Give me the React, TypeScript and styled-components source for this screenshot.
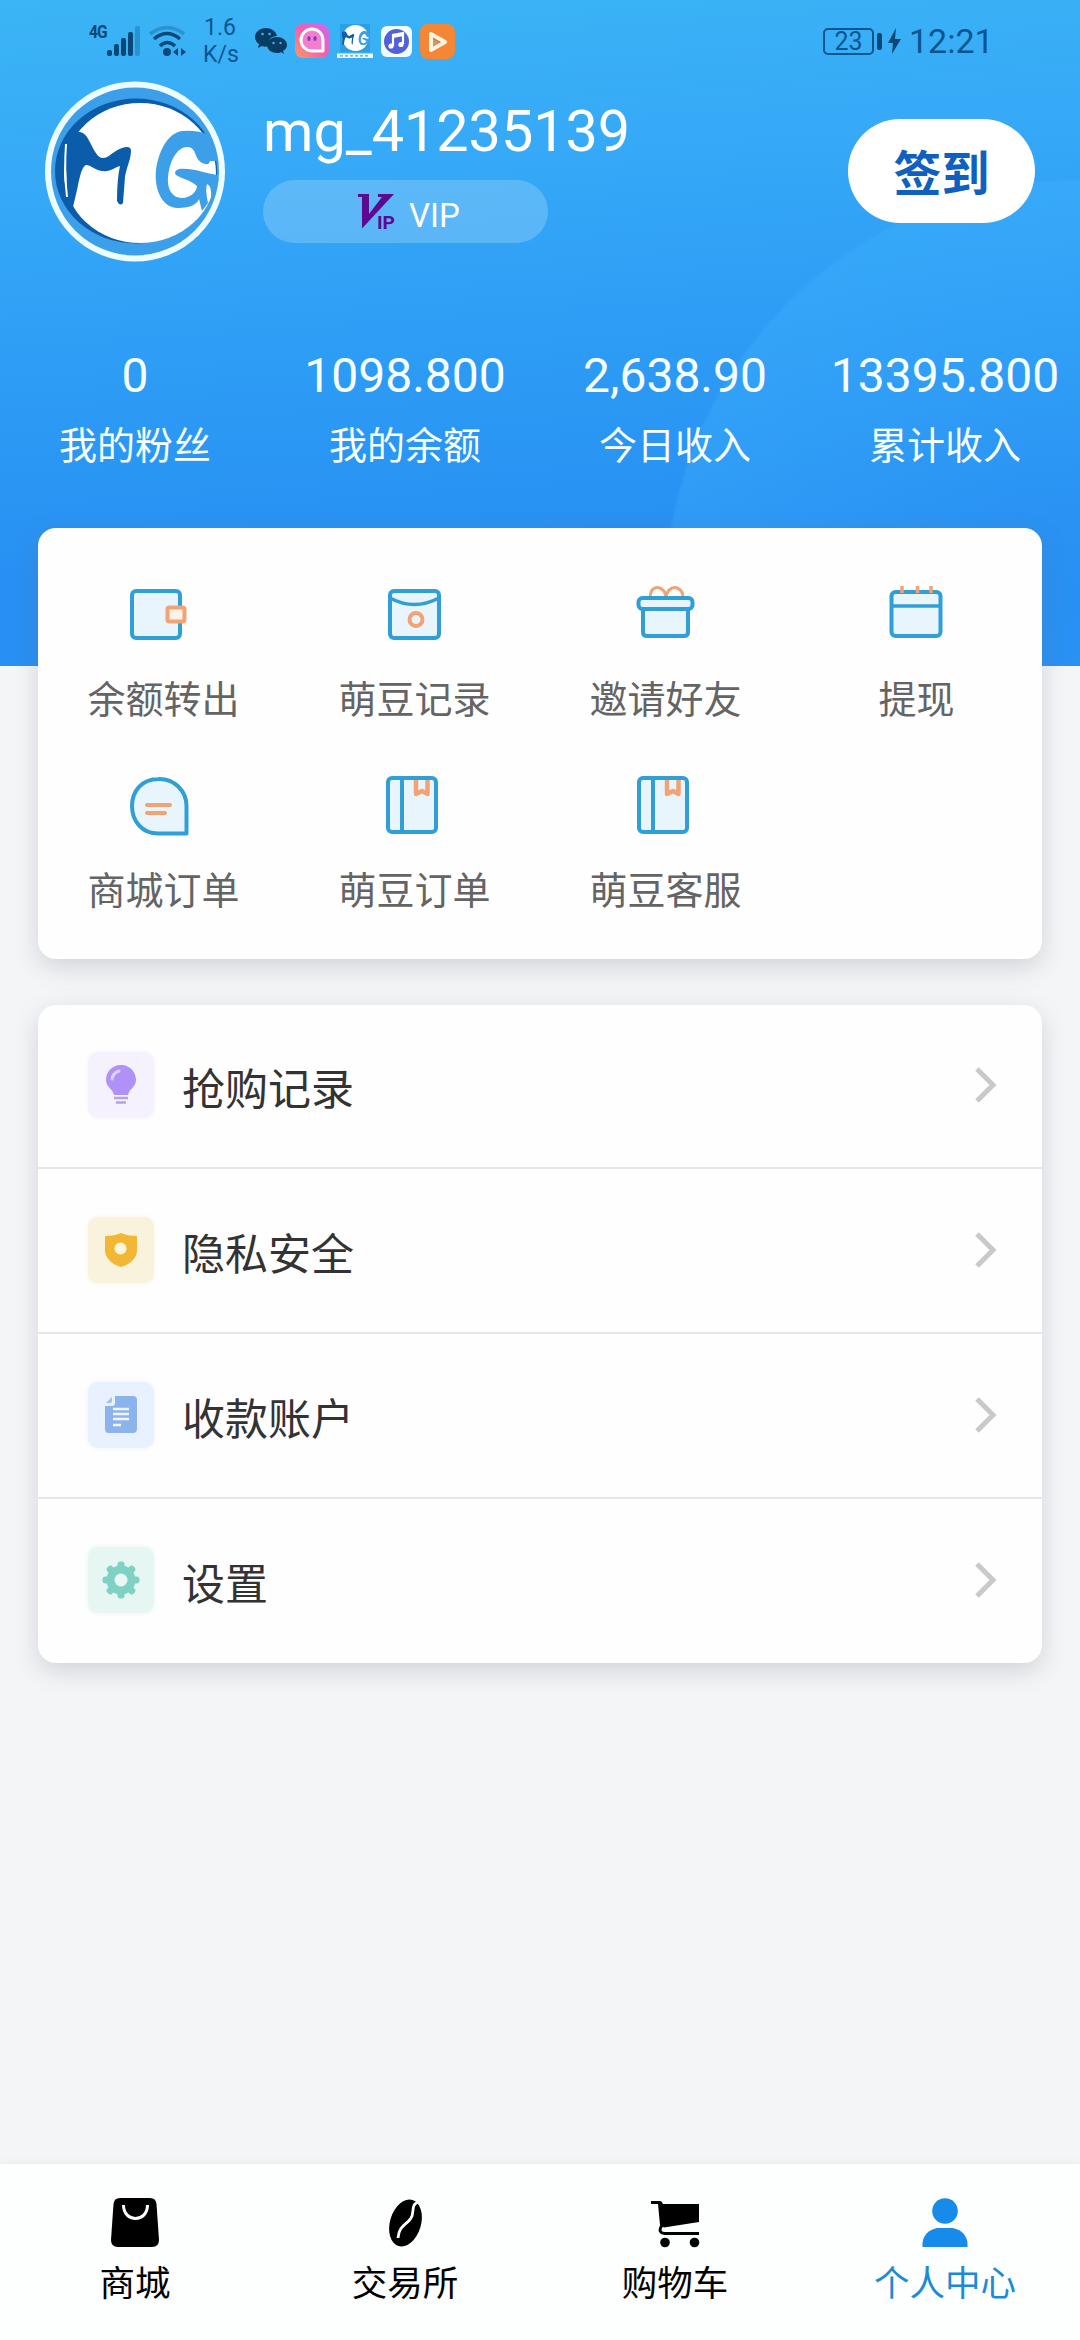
import React from "react";
import styled, { createGlobalStyle } from "styled-components";

const GlobalStyle = createGlobalStyle`
  * { box-sizing: border-box; }
  body { margin: 0; background: #f4f5f7; font-family: Roboto, "Noto Sans CJK SC", sans-serif; }
  svg { display: block; flex: none; overflow: visible; }
`;

const Screen = styled.div`
  width: 1080px;
  height: 2340px;
  display: flex;
  flex-direction: column;
  overflow: hidden;
  background: #f4f5f7;
`;

const Header = styled.header`
  height: 666px;
  flex: none;
  display: flex;
  flex-direction: column;
  background:
    radial-gradient(circle at 1085px 600px, rgba(70, 185, 255, 0) 0, rgba(70, 185, 255, 0.26) 418px, transparent 422px),
    linear-gradient(176deg, #3bb5f5 0%, #36a9f7 25%, #2d9df5 50%, #2890f3 78%, #2890f3 100%);
`;

const StatusBar = styled.div`
  height: 81px;
  flex: none;
  display: flex;
  align-items: flex-start;
  justify-content: space-between;
  padding: 11px 92px 0 89px;
  color: #0b568f;
`;

const StatusGroup = styled.div`
  display: flex;
  align-items: center;
  height: 60px;
`;

const Network = styled.span`
  align-self: flex-start;
  width: 18px;
  margin-top: 9px;
  font: 700 19px/24px Roboto, sans-serif;
  letter-spacing: -1px;
  transform: scaleX(0.82);
  transform-origin: left;
  color: #0a4877;
`;

const Speed = styled.span`
  width: 34px;
  margin: 0 18px 0 16px;
  font-size: 23px;
  line-height: 27px;
  text-align: center;
`;

const AppIcons = styled.div`
  display: flex;
  align-items: center;
  gap: 8px;
`;

const Battery = styled.span`
  width: 51px;
  height: 27px;
  border: 2px solid #0b568f;
  border-radius: 5px;
  font-size: 25px;
  line-height: 24px;
  text-align: center;
`;

const BatteryTip = styled.span`
  width: 5px;
  height: 17px;
  margin-left: 3px;
  border-radius: 2px;
  background: #0a4877;
`;

const Clock = styled.span`
  font-size: 34px;
  line-height: 40px;
  margin-left: 8px;
  width: 79px;
  white-space: nowrap;
`;

const Profile = styled.section`
  display: flex;
  height: 182px;
  flex: none;
  padding: 0 45px;
`;

const Identity = styled.div`
  display: flex;
  flex-direction: column;
  margin-left: 38px;
  flex: 1;
`;

const UserName = styled.h1`
  margin: 18px 0 0;
  font-size: 57.5px;
  line-height: 66px;
  font-weight: 400;
  color: #fff;
`;

const VipBadge = styled.div`
  width: 285px;
  height: 63px;
  margin-top: 15px;
  padding-left: 7px;
  display: flex;
  align-items: center;
  justify-content: center;
  gap: 14px;
  border-radius: 32px;
  background: rgba(255, 255, 255, 0.2);
  color: #fff;
  font-size: 33px;
`;

const VipText = styled.span`
  padding-top: 9px;
  line-height: 40px;
`;

const SignIn = styled.button`
  width: 187px;
  height: 104px;
  margin-top: 38px;
  padding: 0 0 3px;
  border: 0;
  border-radius: 52px;
  background: #fff;
  color: #0f61bd;
  font: 700 48px/60px "Noto Sans CJK SC", sans-serif;
`;

const Stats = styled.section`
  display: grid;
  grid-template-columns: repeat(4, 270px);
  margin-top: 85px;
`;

const Stat = styled.div`
  display: flex;
  flex-direction: column;
  align-items: center;
  color: #f7ffff;
`;

const StatValue = styled.span`
  font-size: 48px;
  line-height: 56px;
`;

const StatLabel = styled.span`
  margin-top: 11px;
  font: 400 38px/56px "Noto Sans CJK SC", sans-serif;
`;

const Card = styled.section`
  width: 1004px;
  flex: none;
  margin: 0 auto;
  border-radius: 18px;
  background: #fefefe;
  box-shadow: 0 8px 24px rgba(110, 110, 120, 0.24);
`;

const Shortcuts = styled(Card)`
  position: relative;
  height: 431px;
  margin-top: -138px;
  padding-top: 44px;
  display: grid;
  grid-template-columns: repeat(4, 1fr);
  grid-auto-rows: 191px;
`;

const Shortcut = styled.a`
  display: flex;
  flex-direction: column;
  align-items: center;
  color: #646464;
  font: 400 38px/56px "Noto Sans CJK SC", sans-serif;
`;

const ShortcutLabel = styled.span`
  margin-top: 17px;
`;

const Menu = styled(Card)`
  margin-top: 46px;
  height: 658px;
`;

const MenuRow = styled.a<{ $first?: boolean }>`
  height: ${(p) => (p.$first ? 162 : 165)}px;
  display: flex;
  align-items: center;
  padding: 0 46px 0 50px;
  border-top: ${(p) => (p.$first ? "0" : "2px solid #e6e7e8")};
`;

const Tile = styled.span<{ $bg: string }>`
  width: 66px;
  height: 66px;
  margin-bottom: 2px;
  border-radius: 10px;
  display: flex;
  align-items: center;
  justify-content: center;
  background: ${(p) => p.$bg};
  box-shadow: 0 0 5px ${(p) => p.$bg};
`;

const MenuLabel = styled.span`
  flex: 1;
  margin-left: 28px;
  font: 400 43px/64px "Noto Sans CJK SC", sans-serif;
  color: #333;
`;

const TabBar = styled.nav`
  height: 176px;
  flex: none;
  margin-top: auto;
  display: grid;
  grid-template-columns: repeat(4, 1fr);
  background: #fdfefe;
  box-shadow: 0 -2px 6px rgba(100, 110, 120, 0.06);
`;

const Tab = styled.a<{ $active?: boolean }>`
  display: flex;
  flex-direction: column;
  align-items: center;
  padding-top: 33px;
  gap: 8px;
  color: ${(p) => (p.$active ? "#1c8bd6" : "#000")};
  font: 400 35.5px/52px "Noto Sans CJK SC", sans-serif;
`;

const SignalIcon = () => (
  <svg width="34" height="30" viewBox="0 0 34 30" fill="#0a4877">
    <rect x="0" y="24" width="5" height="6" rx="2" />
    <rect x="7" y="18" width="5" height="12" rx="2" />
    <rect x="14" y="12" width="5" height="18" rx="2" />
    <rect x="21" y="6" width="5" height="24" rx="2" />
    <rect x="28" y="0" width="5" height="30" rx="2" opacity=".3" />
  </svg>
);

const WifiIcon = () => (
  <svg width="38" height="30" viewBox="0 0 38 30" fill="none" stroke="#0a4877" strokeWidth="3.5" style={{ marginLeft: 8 }}>
    <path d="M1 8Q18-5 35 8" opacity=".3" />
    <path d="M5 13Q18 2 31 13" />
    <path d="M11 20Q18 13 26 20" />
    <circle cx="18" cy="26" r="4" fill="#0a4877" stroke="none" />
    <path d="M24 26l5-4v8zM37 26l-5-4v8z" fill="#0a4877" stroke="none" />
  </svg>
);

const WeChatIcon = () => (
  <svg width="32" height="27" viewBox="0 0 32 27">
    <path d="M11 0C5 0 0 4 0 9c0 3 2 6 4 7l-1 4 4-2c2 1 4 1 6 0C12 12 17 8 22 8 21 3 16 0 11 0z" fill="#083c63" />
    <path d="M22 9c-5 0-10 3-10 8s5 8 10 8c1 0 3 0 4-1l3 2-1-3c2-1 4-3 4-6 0-5-5-8-10-8z" fill="#083c63" />
    <g fill="#3eb3f5"><circle cx="7.500" cy="6" r="1.300" /><circle cx="14.500" cy="6" r="1.300" /><circle cx="18.500" cy="15" r="1.200" /><circle cx="25.500" cy="15" r="1.200" /></g>
  </svg>
);

const ChatAppIcon = () => (
  <svg width="34" height="34" viewBox="0 0 34 34">
    <defs>
      <linearGradient id="chatApp" x1="0" y1="1" x2="1" y2="0">
        <stop offset="0" stopColor="#ff9a62" /><stop offset=".5" stopColor="#f65cae" /><stop offset="1" stopColor="#c46bf5" />
      </linearGradient>
    </defs>
    <rect width="34" height="34" rx="8" fill="url(#chatApp)" />
    <path d="M17 5a11 11 0 1 0 0 22h11V16A11 11 0 0 0 17 5z" fill="#f07fd0" stroke="#fff" strokeWidth="3" strokeLinejoin="round" />
    <ellipse cx="14" cy="14.500" rx="1.600" ry="2.500" fill="#8a3aa8" /><ellipse cx="20" cy="14.500" rx="1.600" ry="2.500" fill="#8a3aa8" />
  </svg>
);

const Letters = () => (
  <g>
    <path d="M18 58L30 51Q38 50 42 56C47 64 51 76 57 77C63 78 68 70 77 67Q86 64 86 70C86 78 81 88 80 96L78 122Q75 126 72 120Q72 98 75 85C70 86 66 91 57 90C50 89 46 84 41 84C36 86 34 100 32 109L28 126L21 126Q23 90 18 58z" fill="#0b5cab" />
    <path d="M164 54Q152 49 138 50C124 51 114 68 111 89C109 106 116 127 133 127C146 127 152 123 154 118L157 130L163 122Q160 108 162 103Q167 105 166 116L174 100L172 94C158 92 150 87 134 88Q128 90 131 94C137 98 144 98 152 105C152 110 146 117 137 117C127 117 122 108 123 96C125 78 133 66 142 66C153 66 148 80 160 83Q164 84 165 80L173 80z" fill="#3c9fe8" />
  </g>
);

const Avatar = () => (
  <svg width="180" height="181" viewBox="0 0 180 181">
    <defs><clipPath id="avatarClip"><circle cx="90" cy="90.500" r="84" /></clipPath></defs>
    <circle cx="90" cy="90.500" r="87" fill="#3b9fe9" stroke="#edfcff" strokeWidth="6" />
    <g clipPath="url(#avatarClip)">
      <ellipse cx="91" cy="90" rx="81" ry="72.500" fill="#0b5cab" />
      <ellipse cx="95" cy="92" rx="76" ry="70" fill="#fff" />
      <Letters />
      <path d="M21 63Q19 90 22 116" fill="none" stroke="#fff" strokeWidth="2" />
    </g>
  </svg>
);

const MiniAvatar = () => (
  <svg width="36" height="34" viewBox="0 0 36 34">
    <rect x="3" width="30" height="28" fill="#2a9fe2" />
    <circle cx="18.500" cy="14" r="13" fill="#fff" />
    <g transform="translate(1.500 -2) scale(.182)"><Letters /></g>
    <rect y="29.500" width="36" height="4.500" fill="#e7fbff" />
    <path d="M3 31.800h29" stroke="#4fa6cc" strokeWidth="1.300" strokeDasharray="3 2" />
  </svg>
);

const MusicAppIcon = () => (
  <svg width="31" height="31" viewBox="0 0 31 31">
    <rect width="31" height="31" rx="6" fill="#f3fcff" />
    <circle cx="15.500" cy="15.500" r="12.500" fill="#5261d8" />
    <path d="M12 20V9l10-2v11M12 11l10-2" fill="none" stroke="#fff" strokeWidth="2.200" />
    <circle cx="10" cy="20" r="2.600" fill="#fff" /><circle cx="20" cy="18.500" r="2.600" fill="#fff" />
  </svg>
);

const VideoAppIcon = () => (
  <svg width="35" height="35" viewBox="0 0 35 35">
    <rect width="35" height="35" rx="8" fill="#f58635" />
    <path d="M11 10v16l14-8z" fill="#e56e28" stroke="#fff5df" strokeWidth="4" strokeLinejoin="round" />
    <path d="M13 15v7l6-4z" fill="#c89b7a" />
  </svg>
);

const Bolt = () => (
  <svg width="13" height="26" viewBox="0 0 13 26" fill="#0a4877" style={{ marginLeft: 6 }}>
    <path d="M8 0L0 15h5L4 26l9-15H7z" />
  </svg>
);

const VipIcon = () => (
  <svg width="37" height="36" viewBox="0 0 37 36" fill="#5b0a91">
    <path d="M0 0H11V20L24 3H20V0H36L4 34.500V3H0z" />
    <text x="19" y="35" fontFamily="Roboto, sans-serif" fontSize="19" fontWeight="700" textLength="18" lengthAdjust="spacingAndGlyphs">IP</text>
  </svg>
);

const line = { fill: "#e9f5fd", stroke: "#2f9fd6", strokeWidth: 4, strokeLinejoin: "round" as const };
const accent = { fill: "none", stroke: "#f3a273", strokeWidth: 4, strokeLinejoin: "round" as const };

const Canvas = ({ children }: { children: React.ReactNode }) => (
  <svg width="80" height="80" viewBox="0 0 80 80">{children}</svg>
);

const WalletIcon = () => (
  <Canvas>
    <rect x="8" y="19" width="48" height="47" rx="4" {...line} />
    <rect x="43.500" y="35.500" width="17" height="14" rx="2" {...accent} fill="#fff3e9" />
  </Canvas>
);
const EnvelopeIcon = () => (
  <Canvas>
    <rect x="15" y="19" width="49" height="47" rx="4" {...line} />
    <path d="M15 26Q39 39 64 26" {...line} fill="none" strokeWidth="3.500" />
    <circle cx="41" cy="47.500" r="6.500" {...accent} />
  </Canvas>
);
const GiftIcon = () => (
  <Canvas>
    <path d="M24 25Q25 15 32 15.500Q39 17 40 25Q42 15 50 15.500Q57 18 57 25" {...accent} strokeWidth="3" />
    <path d="M17 38V60q0 4 4 4H58q4 0 4-4V38" {...line} />
    <rect x="12.500" y="26" width="54" height="11" rx="4" {...line} />
  </Canvas>
);
const CalendarIcon = () => (
  <Canvas>
    <rect x="14.500" y="20" width="49" height="44" rx="4" {...line} />
    <path d="M15 34H63" {...line} strokeWidth="3.500" />
    <path d="M25 14V21M40.500 14V21M54 14V21" {...accent} strokeWidth="3.500" />
  </Canvas>
);
const ChatIcon = () => (
  <Canvas>
    <path d="M34.500 16A27 27 0 0 1 62.500 43V70.500H34C18 70.500 8 58 8 43S18 16 34.500 16z" {...line} />
    <path d="M23 42H46M23 50H41" {...accent} strokeLinecap="round" />
  </Canvas>
);
const BookIcon = () => (
  <Canvas>
    <rect x="13" y="15" width="48" height="54" rx="4" {...line} />
    <path d="M27 15V69" {...line} />
    <path d="M41 17V31L47 28L52.500 31V17" {...accent} strokeWidth="4.500" />
  </Canvas>
);

const BulbIcon = () => (
  <svg width="32" height="40" viewBox="0 0 32 40">
    <path d="M16 0C7 0 1 7 1 15c0 7 7 9 8 15h14c1-6 8-8 8-15C31 7 25 0 16 0z" fill="#af91f8" />
    <path d="M7 14q1-6 7-8" fill="none" stroke="#dfd2fd" strokeWidth="3" strokeLinecap="round" />
    <path d="M9 33h14M11 37.500h10" stroke="#b5a3dd" strokeWidth="2.500" />
  </svg>
);
const ShieldIcon = () => (
  <svg width="32" height="34" viewBox="0 0 32 34">
    <path d="M0 3Q10 3 16 0Q22 3 32 3V18Q31 29 16 34Q1 29 0 18z" fill="#f2b735" />
    <circle cx="15.500" cy="15.500" r="6" fill="#fdf5dc" />
  </svg>
);
const DocumentIcon = () => (
  <svg width="32" height="37" viewBox="0 0 32 37">
    <path d="M10 0H28q4 0 4 4V33q0 4-4 4H4q-4 0-4-4V10H7q3 0 3-3z" fill="#8db3ed" />
    <path d="M7 1V5q0 2-2 2H1z" fill="#8db3ed" opacity=".8" />
    <path d="M8 13H24M8 18H24M8 23H24M8 29H16" stroke="#eef6ff" strokeWidth="2.300" />
  </svg>
);
const GearIcon = () => (
  <svg width="38" height="38" viewBox="0 0 38 38">
    <g fill="#7fd1c4">
      <circle cx="19" cy="19" r="14.500" />
      {[0, 45, 90, 135].map((a) => (
        <rect key={a} x="15.500" y=".5" width="7" height="37" rx="3" transform={`rotate(${a} 19 19)`} />
      ))}
    </g>
    <circle cx="19" cy="19" r="6.500" fill="#e9f8f5" />
  </svg>
);

const Chevron = () => (
  <svg width="22" height="40" viewBox="0 0 22 40" style={{ marginBottom: 2 }}>
    <path d="M3 4L19 20L3 36" fill="none" stroke="#c9c9cb" strokeWidth="5" />
  </svg>
);

const BagIcon = () => (
  <svg width="48" height="50" viewBox="0 0 48 50">
    <path d="M9 1H39Q45 1 45.500 7L48 43Q48 50 41 50H7Q0 50 0 43L2.500 7Q3 1 9 1z" />
    <path d="M12.500 8C12.500 26 36.500 26 36.500 8" fill="none" stroke="#fff" strokeWidth="3" />
  </svg>
);
const BeanIcon = () => (
  <svg width="48" height="50" viewBox="0 0 48 50">
    <ellipse cx="24.500" cy="26" rx="15.500" ry="24" transform="rotate(17 24.500 26)" />
    <path d="M38 5C29 7 34 15 30 21C26 28 18 28 17 41" fill="none" stroke="#fff" strokeWidth="2.800" />
  </svg>
);
const CartIcon = () => (
  <svg width="48" height="50" viewBox="0 0 48 50">
    <path d="M0 4H9Q11 4 12 7H48V25L13 30.500L9 28L7 7H0z" />
    <path d="M11 28Q6 36 14 36.500H48" fill="none" stroke="#000" strokeWidth="3" />
    <circle cx="14" cy="45.500" r="4.800" /><circle cx="43.500" cy="45.500" r="4.800" />
  </svg>
);
const PersonIcon = () => (
  <svg width="48" height="50" viewBox="0 0 48 50" fill="#168be9">
    <circle cx="24" cy="14" r="12.800" />
    <path d="M1.500 50V46Q3 34 16 31H32Q45 34 46.500 46V50z" />
  </svg>
);

const stats = [
  ["0", "我的粉丝"],
  ["1098.800", "我的余额"],
  ["2,638.90", "今日收入"],
  ["13395.800", "累计收入"],
];

const shortcuts: [string, React.FC][] = [
  ["余额转出", WalletIcon],
  ["萌豆记录", EnvelopeIcon],
  ["邀请好友", GiftIcon],
  ["提现", CalendarIcon],
  ["商城订单", ChatIcon],
  ["萌豆订单", BookIcon],
  ["萌豆客服", BookIcon],
];

const menu: [string, React.FC, string][] = [
  ["抢购记录", BulbIcon, "#f5f2fd"],
  ["隐私安全", ShieldIcon, "#f9f2dc"],
  ["收款账户", DocumentIcon, "#eaf1fe"],
  ["设置", GearIcon, "#e6f6f3"],
];

const tabs: [string, React.FC][] = [
  ["商城", BagIcon],
  ["交易所", BeanIcon],
  ["购物车", CartIcon],
  ["个人中心", PersonIcon],
];

export default function App() {
  return (
    <Screen>
      <GlobalStyle />
      <Header>
        <StatusBar>
          <StatusGroup>
            <Network>4G</Network>
            <SignalIcon />
            <WifiIcon />
            <Speed>1.6 K/s</Speed>
            <AppIcons>
              <WeChatIcon />
              <ChatAppIcon />
              <MiniAvatar />
              <MusicAppIcon />
              <VideoAppIcon />
            </AppIcons>
          </StatusGroup>
          <StatusGroup>
            <Battery>23</Battery>
            <BatteryTip />
            <Bolt />
            <Clock>12:21</Clock>
          </StatusGroup>
        </StatusBar>
        <Profile>
          <Avatar />
          <Identity>
            <UserName>mg_41235139</UserName>
            <VipBadge>
              <VipIcon />
              <VipText>VIP</VipText>
            </VipBadge>
          </Identity>
          <SignIn>签到</SignIn>
        </Profile>
        <Stats>
          {stats.map(([value, label]) => (
            <Stat key={label}>
              <StatValue>{value}</StatValue>
              <StatLabel>{label}</StatLabel>
            </Stat>
          ))}
        </Stats>
      </Header>
      <Shortcuts>
        {shortcuts.map(([label, Icon]) => (
          <Shortcut key={label}>
            <Icon />
            <ShortcutLabel>{label}</ShortcutLabel>
          </Shortcut>
        ))}
      </Shortcuts>
      <Menu>
        {menu.map(([label, Icon, bg], i) => (
          <MenuRow key={label} $first={i === 0}>
            <Tile $bg={bg}>
              <Icon />
            </Tile>
            <MenuLabel>{label}</MenuLabel>
            <Chevron />
          </MenuRow>
        ))}
      </Menu>
      <TabBar>
        {tabs.map(([label, Icon], i) => (
          <Tab key={label} $active={i === 3}>
            <Icon />
            {label}
          </Tab>
        ))}
      </TabBar>
    </Screen>
  );
}
